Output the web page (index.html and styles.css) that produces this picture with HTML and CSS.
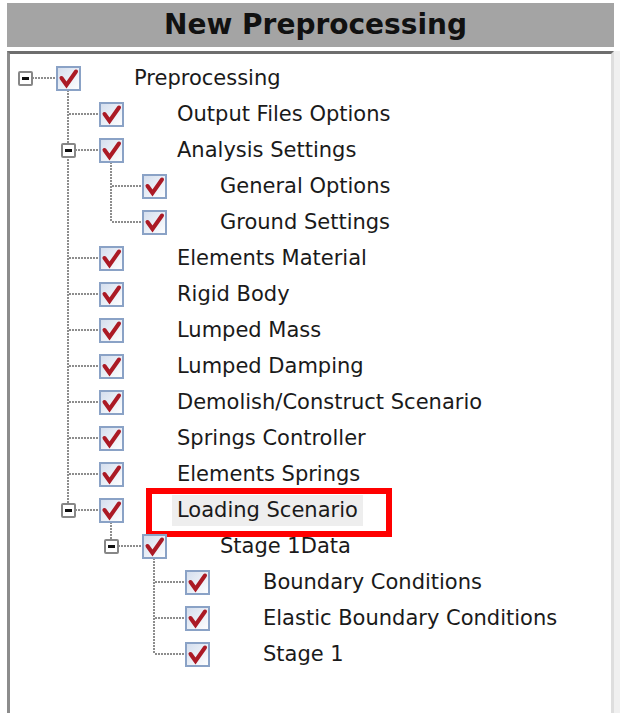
FILE: index.html
```html
<!DOCTYPE html>
<html>
<head>
<meta charset="utf-8">
<link rel="stylesheet" href="styles.css">
</head>
<body>
<div class="app">
  <div class="header"><span class="title">New Preprocessing</span></div>
  <div class="panel">
    <div class="tree">
      <div class="row">
        <span class="cell root"><span class="exp"></span></span>
        <span class="cell chk open"><svg class="cb" viewBox="0 0 25 25"><use href="#cb"/></svg></span>
        <span class="label">Preprocessing</span>
      </div>
      <div class="row">
        <span class="cell"></span>
        <span class="cell tee"></span>
        <span class="cell chk"><svg class="cb" viewBox="0 0 25 25"><use href="#cb"/></svg></span>
        <span class="label">Output Files Options</span>
      </div>
      <div class="row">
        <span class="cell"></span>
        <span class="cell tee"><span class="exp"></span></span>
        <span class="cell chk open"><svg class="cb" viewBox="0 0 25 25"><use href="#cb"/></svg></span>
        <span class="label">Analysis Settings</span>
      </div>
      <div class="row">
        <span class="cell"></span>
        <span class="cell pipe"></span>
        <span class="cell tee"></span>
        <span class="cell chk"><svg class="cb" viewBox="0 0 25 25"><use href="#cb"/></svg></span>
        <span class="label">General Options</span>
      </div>
      <div class="row">
        <span class="cell"></span>
        <span class="cell pipe"></span>
        <span class="cell elbow"></span>
        <span class="cell chk"><svg class="cb" viewBox="0 0 25 25"><use href="#cb"/></svg></span>
        <span class="label">Ground Settings</span>
      </div>
      <div class="row">
        <span class="cell"></span>
        <span class="cell tee"></span>
        <span class="cell chk"><svg class="cb" viewBox="0 0 25 25"><use href="#cb"/></svg></span>
        <span class="label">Elements Material</span>
      </div>
      <div class="row">
        <span class="cell"></span>
        <span class="cell tee"></span>
        <span class="cell chk"><svg class="cb" viewBox="0 0 25 25"><use href="#cb"/></svg></span>
        <span class="label">Rigid Body</span>
      </div>
      <div class="row">
        <span class="cell"></span>
        <span class="cell tee"></span>
        <span class="cell chk"><svg class="cb" viewBox="0 0 25 25"><use href="#cb"/></svg></span>
        <span class="label">Lumped Mass</span>
      </div>
      <div class="row">
        <span class="cell"></span>
        <span class="cell tee"></span>
        <span class="cell chk"><svg class="cb" viewBox="0 0 25 25"><use href="#cb"/></svg></span>
        <span class="label">Lumped Damping</span>
      </div>
      <div class="row">
        <span class="cell"></span>
        <span class="cell tee"></span>
        <span class="cell chk"><svg class="cb" viewBox="0 0 25 25"><use href="#cb"/></svg></span>
        <span class="label">Demolish/Construct Scenario</span>
      </div>
      <div class="row">
        <span class="cell"></span>
        <span class="cell tee"></span>
        <span class="cell chk"><svg class="cb" viewBox="0 0 25 25"><use href="#cb"/></svg></span>
        <span class="label">Springs Controller</span>
      </div>
      <div class="row">
        <span class="cell"></span>
        <span class="cell tee"></span>
        <span class="cell chk"><svg class="cb" viewBox="0 0 25 25"><use href="#cb"/></svg></span>
        <span class="label">Elements Springs</span>
      </div>
      <div class="row">
        <span class="cell"></span>
        <span class="cell elbow"><span class="exp"></span></span>
        <span class="cell chk open"><svg class="cb" viewBox="0 0 25 25"><use href="#cb"/></svg></span>
        <span class="label selected">Loading Scenario<span class="mark"></span></span>
      </div>
      <div class="row">
        <span class="cell"></span>
        <span class="cell"></span>
        <span class="cell elbow"><span class="exp"></span></span>
        <span class="cell chk open"><svg class="cb" viewBox="0 0 25 25"><use href="#cb"/></svg></span>
        <span class="label">Stage 1Data</span>
      </div>
      <div class="row">
        <span class="cell"></span>
        <span class="cell"></span>
        <span class="cell"></span>
        <span class="cell tee"></span>
        <span class="cell chk"><svg class="cb" viewBox="0 0 25 25"><use href="#cb"/></svg></span>
        <span class="label">Boundary Conditions</span>
      </div>
      <div class="row">
        <span class="cell"></span>
        <span class="cell"></span>
        <span class="cell"></span>
        <span class="cell tee"></span>
        <span class="cell chk"><svg class="cb" viewBox="0 0 25 25"><use href="#cb"/></svg></span>
        <span class="label">Elastic Boundary Conditions</span>
      </div>
      <div class="row">
        <span class="cell"></span>
        <span class="cell"></span>
        <span class="cell"></span>
        <span class="cell elbow"></span>
        <span class="cell chk"><svg class="cb" viewBox="0 0 25 25"><use href="#cb"/></svg></span>
        <span class="label">Stage 1</span>
      </div>
    </div>
  </div>
</div>
<svg class="defs" width="0" height="0">
  <defs>
    <linearGradient id="cbfill" x1="0" y1="0" x2="1" y2="1">
      <stop offset="0" stop-color="#d3dded"/>
      <stop offset="1" stop-color="#ffffff"/>
    </linearGradient>
    <g id="cb">
      <rect x="1" y="1" width="23" height="23" fill="url(#cbfill)" stroke="#8aa2c6" stroke-width="2"/>
      <path d="M5.5 12 L10.5 19 L20 5.5" fill="none" stroke="#ab1a25" stroke-width="4" stroke-linejoin="miter" stroke-linecap="round"/>
    </g>
  </defs>
</svg>
</body>
</html>
```

FILE: styles.css
```css
html, body {
  margin: 0;
  padding: 0;
  background: #ffffff;
}

.app {
  height: 713px;
  box-sizing: border-box;
  padding: 3px 9px 0 7px;
  display: flex;
  flex-direction: column;
  gap: 4px;
}

.header {
  height: 44px;
  flex: none;
  background: #a4a4a4;
  display: flex;
  align-items: center;
  justify-content: center;
  padding-left: 10px;
}

.title {
  font-family: "DejaVu Sans", Verdana, sans-serif;
  font-weight: bold;
  font-size: 28px;
  color: #111111;
  line-height: 1;
  margin-top: -1px;
}

.panel {
  flex: 1;
  background: #ffffff;
  border-top: 3px solid #6e6e6e;
  border-left: 3px solid #8c8c8c;
  border-right: 3px solid #dedede;
  box-shadow: 6px 0 0 0 #f0f0f0;
  padding-top: 6px;
}

.tree {
  display: flex;
  flex-direction: column;
}

.row {
  display: flex;
  align-items: center;
  height: 36px;
}

.cell {
  flex: none;
  width: 43px;
  height: 36px;
  position: relative;
}

.pipe::before,
.tee::before,
.elbow::before,
.open::before {
  content: "";
  position: absolute;
  left: 14px;
  width: 2px;
  background: repeating-linear-gradient(to bottom, #8d8d8d 0 2px, transparent 2px 3px);
}

.pipe::before,
.tee::before {
  top: 0;
  bottom: 0;
}

.elbow::before {
  top: 0;
  height: 18px;
}

.open::before {
  top: 18px;
  bottom: 0;
}

.tee::after,
.elbow::after,
.root::after {
  content: "";
  position: absolute;
  left: 16px;
  top: 17px;
  width: 30px;
  height: 2px;
  background: repeating-linear-gradient(to right, #8d8d8d 0 2px, transparent 2px 3px);
}

.exp {
  position: absolute;
  left: 8px;
  top: 11px;
  width: 15px;
  height: 15px;
  box-sizing: border-box;
  border: 2px solid #878787;
  border-radius: 2px;
  background: #ffffff;
  z-index: 1;
}

.exp::after {
  content: "";
  position: absolute;
  left: 2px;
  top: 4px;
  width: 7px;
  height: 3px;
  background: #111111;
}

.cb {
  position: absolute;
  left: 3px;
  top: 6px;
  width: 25px;
  height: 25px;
  z-index: 1;
}

.label {
  position: relative;
  margin-left: 33px;
  padding: 0 5px;
  height: 31px;
  display: flex;
  align-items: center;
  font-family: "DejaVu Sans", Verdana, sans-serif;
  font-size: 21px;
  color: #1a1a1a;
  white-space: nowrap;
}

.selected {
  background: #eeeeee;
}

.mark {
  position: absolute;
  left: -26px;
  top: -7px;
  width: 246px;
  height: 49px;
  box-sizing: border-box;
  border: 6px solid #ff0000;
}

.defs {
  position: absolute;
  width: 0;
  height: 0;
}
```
